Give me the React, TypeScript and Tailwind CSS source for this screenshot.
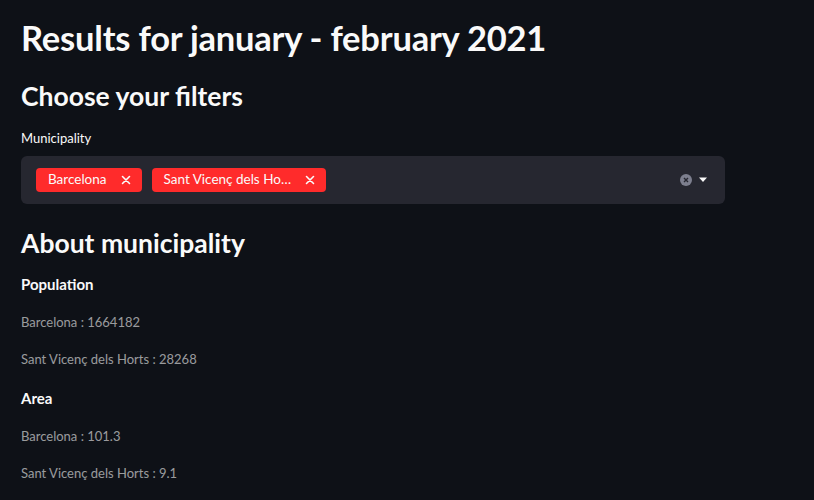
import React from 'react';

const Tag = ({ label }: { label: string }) => (
    <span className="flex items-center h-6 rounded bg-[#ff2b2b] text-[#fafafa] text-[13.5px] pl-3 pr-2">
        <span className="leading-none">{label}</span>
        <svg width="16" height="16" viewBox="0 0 16 16" className="ml-[11px]">
            <path d="M4.5 4.5l7 7M11.5 4.5l-7 7" stroke="#fafafa" strokeWidth="1.6" strokeLinecap="round" />
        </svg>
    </span>
);

export default function App() {
    return (
        <div
            className="w-[814px] h-[500px] overflow-hidden bg-[#0e1117] text-[#fafafa] px-[21px]"
            style={{ fontFamily: 'Lato, "Open Sans", sans-serif' }}
        >
            <h1 className="pt-[15px] text-[34.5px] font-bold leading-[46px] tracking-[-0.2px]">
                Results for january - february 2021
            </h1>
            <h2 className="mt-[17px] text-[26.5px] font-bold leading-[36px]">Choose your filters</h2>
            <div className="mt-[14px] text-[13px] leading-[20px]">Municipality</div>
            <div className="mt-[8px] w-[704px] h-[48px] rounded-md bg-[#262730] flex items-center pl-[15px] pr-[17px]">
                <div className="flex gap-[10px] flex-1">
                    <Tag label="Barcelona" />
                    <Tag label="Sant Vicenç dels Ho…" />
                </div>
                <div className="flex items-center gap-[6px]">
                    <svg width="12" height="12" viewBox="0 0 12 12">
                        <circle cx="6" cy="6" r="6" fill="#7d7f8e" />
                        <path d="M4 4l4 4M8 4l-4 4" stroke="#262730" strokeWidth="1.4" />
                    </svg>
                    <svg width="10" height="6" viewBox="0 0 10 6">
                        <path d="M1 0.5h8L5 5z" fill="#fafafa" />
                    </svg>
                </div>
            </div>
            <h2 className="mt-[21px] text-[26.5px] font-bold leading-[36px]">About municipality</h2>
            <h4 className="mt-[12px] text-[15px] font-bold leading-[22px]">Population</h4>
            <p className="mt-[16px] text-[13px] leading-[22px] text-[#fafafa]/60">Barcelona : 1664182</p>
            <p className="mt-[15px] text-[13px] leading-[22px] text-[#fafafa]/60">Sant Vicenç dels Horts : 28268</p>
            <h4 className="mt-[17px] text-[15px] font-bold leading-[22px]">Area</h4>
            <p className="mt-[16px] text-[13px] leading-[22px] text-[#fafafa]/60">Barcelona : 101.3</p>
            <p className="mt-[15px] text-[13px] leading-[22px] text-[#fafafa]/60">Sant Vicenç dels Horts : 9.1</p>
        </div>
    );
}
